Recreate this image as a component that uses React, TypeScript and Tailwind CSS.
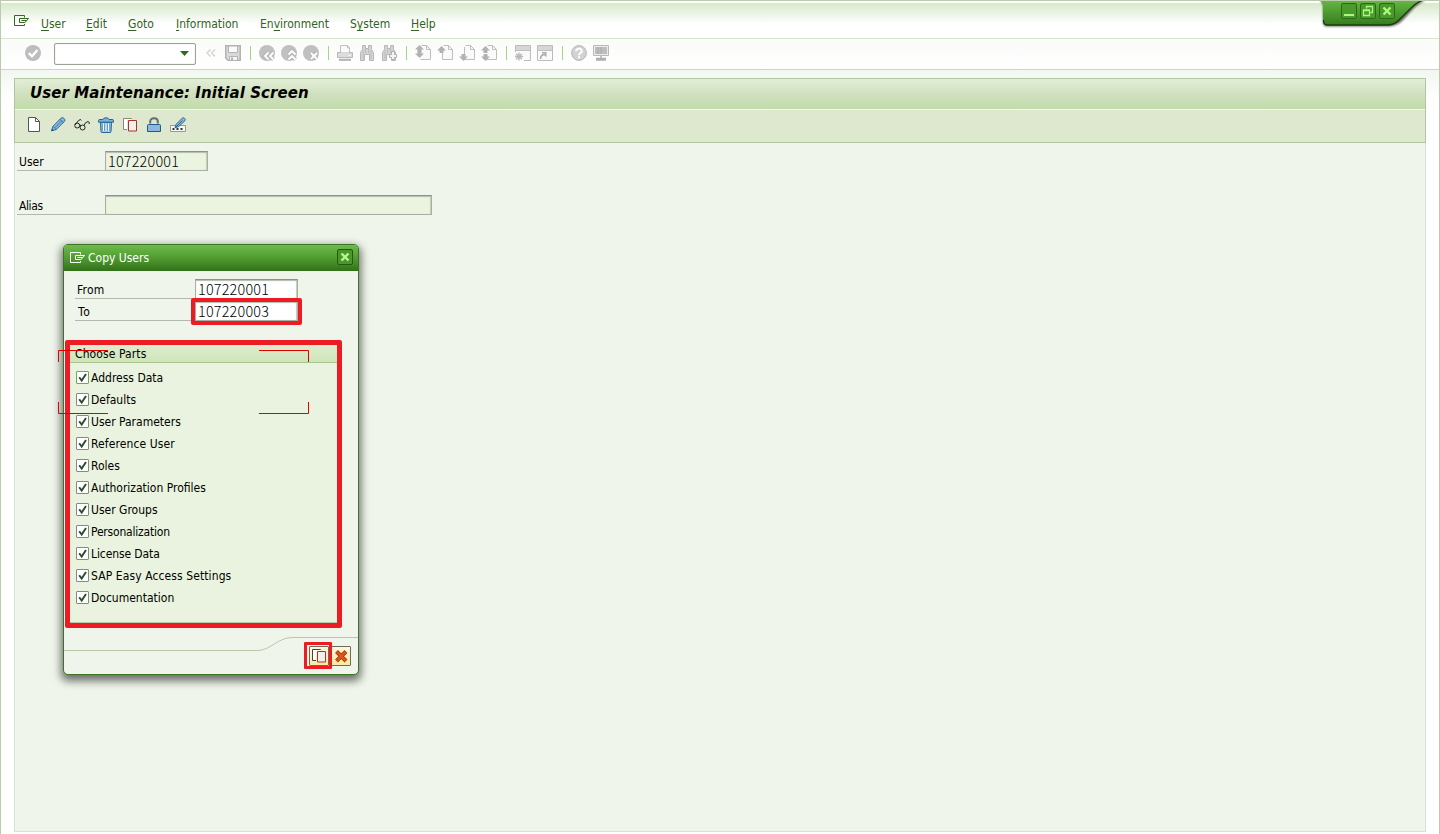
import type { ReactNode } from "react";

function Svg({ children, size = 16 }: { children: ReactNode; size?: number }) {
  return (
    <svg width={size} height={size} viewBox={`0 0 ${size} ${size}`} fill="none" className="block shrink-0">
      {children}
    </svg>
  );
}

function Cell({ children }: { children: ReactNode }) {
  return <div className="flex w-[22px] shrink-0 justify-center pb-0.5">{children}</div>;
}

function Sep() {
  return (
    <div className="flex w-3 shrink-0 justify-center pb-0.5">
      <div className="h-[14px] w-px bg-[#a9d18c]" />
    </div>
  );
}

function ExitIcon({ color }: { color: string }) {
  return (
    <svg width="16" height="12" viewBox="0 0 16 12" fill="none" stroke={color} className="block shrink-0">
      <path d="M10.5 2V.5H.5V10.5H10.5V9" />
      <path d="M14.500 3.500H5.500V7.500H10.500M7.500 5.500H12.500M10.500 2.500V3.500M14.500 3.500L10.500 8" />
    </svg>
  );
}

function OkIcon() {
  return (
    <Svg>
      <circle cx="8" cy="8" r="8" fill="#bdbdbd" />
      <path d="M3.8 8.2 7 11.2 12.4 5" stroke="#fff" strokeWidth="2.4" />
    </Svg>
  );
}

function SaveIcon() {
  return (
    <Svg>
      <path d="M.75.75H15.25V15.25H3L.75 13Z" fill="#d9d9d9" stroke="#b4b4b4" strokeWidth="1.5" />
      <path d="M3.5 1H12.5V7.5H3.5Z" fill="#fafafa" stroke="#b4b4b4" />
      <path d="M4.5 15V11.5H12.5V15" fill="#f5f5f5" stroke="#b4b4b4" />
      <path d="M6 12.500H8V15H6Z" fill="#b4b4b4" />
    </Svg>
  );
}

function RoundIcon({ kind }: { kind: "back" | "up" | "cancel" }) {
  const d =
    kind === "back"
      ? "M9.500 7.500 6 11 9.500 14.5M14.500 7.500 11 11 14.500 14.5"
      : kind === "up"
        ? "M7.5 9.5 11 6 14.5 9.5M7.5 14.5 11 11 14.5 14.5"
        : "M8 8 14 14M14 8 8 14";
  return (
    <Svg>
      <circle cx="8" cy="8" r="8" fill="#c0c0c0" />
      <path d={d} stroke="#b6b6b6" strokeWidth="4" />
      <path d={d} stroke="#fff" strokeWidth="1.9" />
    </Svg>
  );
}

function PrintIcon() {
  return (
    <Svg>
      <path d="M3.5 8V.5H10.5L12.5 2.5V8" fill="#fafafa" stroke="#c0c0c0" />
      <path d="M10.5.5V3H12.5" stroke="#c0c0c0" />
      <path d="M.5 7.5H15.5V12.5H.5Z" fill="#dcdcdc" stroke="#b8b8b8" />
      <path d="M4 5H12V7.500H4Z" fill="#fafafa" />
      <path d="M11.5 10.5H13.5" stroke="#fff" />
      <path d="M2 14.8H14" stroke="#b0b0b0" strokeWidth="2" />
    </Svg>
  );
}

function FindIcon({ plus }: { plus?: boolean }) {
  return (
    <Svg>
      <path
        d="M3.5.5H6.5V3.5H9.5V.5H12.5V4.5L14.5 7.5V15.5H10.5V9.5H5.5V15.5H1.5V7.5L3.5 4.5Z"
        fill="#d4d4d4"
        stroke="#b8b8b8"
      />
      <path d="M6.5 3.5V8M9.5 3.5V8M4 5.5V14M12 5.5V14" stroke="#bcbcbc" />
      {plus && (
        <path
          d="M10.5 6.5H13.5V9.5H15.5V12.5H13.5V14.5H10.5V12.5H8.5V9.5H10.5Z"
          fill="#f4f4f4"
          stroke="#b0b0b0"
        />
      )}
    </Svg>
  );
}

const ARROW_UP = "M4.5 0 9 4.5H6.5V7H2.5V4.5H0Z";

function PageArrowIcon({ kind }: { kind: "first" | "prev" | "next" | "last" }) {
  return (
    <Svg>
      <path d="M4.5.5H11.5L15.5 4.5V14.5H4.5Z" fill="#fafafa" />
      <path d="M6.5.5H11.5L15.5 4.5V14.5H5.5" stroke="#bebebe" />
      {kind !== "first" && kind !== "last" && <path d="M5.5 2V14.5" stroke="#bebebe" />}
      <path d="M11.5.5V4.5H15.5" stroke="#bebebe" />
      {kind === "prev" && <path d={ARROW_UP} transform="translate(0 1)" fill="#b2b2b2" />}
      {kind === "next" && <path d={ARROW_UP} transform="translate(0 16) scale(1 -1)" fill="#b2b2b2" />}
      {(kind === "first" || kind === "last") && (
        <>
          <path d={ARROW_UP} transform={kind === "first" ? "translate(0 0)" : "translate(0 1)"} fill="#b2b2b2" />
          <path d={ARROW_UP} transform={kind === "first" ? "translate(0 13) scale(1 -1)" : "translate(0 16) scale(1 -1)"} fill="#b2b2b2" />
        </>
      )}
    </Svg>
  );
}

function SessionIcon({ kind }: { kind: "new" | "shortcut" }) {
  return (
    <Svg>
      <path d="M.5.5H15.5V15.5H.5Z" fill="#fafafa" stroke="#bcbcbc" />
      <path d="M1 1H15V5H1Z" fill="#d6d6d6" />
      <path d="M1 5.5H15" stroke="#c0c0c0" />
      {kind === "new" ? (
        <>
          <path d="M0 7H9V16H0Z" fill="#fafafa" />
          <path d="M4 7.5V15.5M0 11.5H8M1.2 8.7 6.8 14.3M6.8 8.7 1.2 14.3" stroke="#b8b8b8" strokeWidth="1.3" />
        </>
      ) : (
        <path d="M3.5 14C3.5 11 5 9.5 8 9.5M5 7.8H8.7V11.5" stroke="#aaa" strokeWidth="1.6" />
      )}
    </Svg>
  );
}

function HelpIcon() {
  return (
    <Svg>
      <circle cx="8" cy="8" r="7.4" fill="#d2d2d2" stroke="#b6b6b6" />
      <path d="M5.2 6.2C5.2 2.8 10.8 2.8 10.8 6C10.8 8 8 8 8 10.2" stroke="#fff" strokeWidth="2" />
      <path d="M7 11.3H9V13.2H7Z" fill="#fff" />
    </Svg>
  );
}

function MonitorIcon() {
  return (
    <Svg>
      <path d="M.5.5H15.5V10.5H.5Z" fill="#ececec" stroke="#b8b8b8" />
      <path d="M2 2H14V9H2Z" fill="#bdbdbd" />
      <path d="M5 2V9M8 2V9" stroke="#aaa" />
      <path d="M8 11V13.5M3 13.5H13M3 15H13" stroke="#b0b0b0" strokeWidth="1.5" />
    </Svg>
  );
}

function NewIcon() {
  return (
    <Svg>
      <path d="M2.5 .5H9.5L13.5 4.5V14.5H2.5Z" fill="#fff" stroke="#555" />
      <path d="M9.5 .5V4.5H13.5" stroke="#555" />
    </Svg>
  );
}

function PencilIcon() {
  return (
    <Svg>
      <path d="M1.5 13.8 3 9.3 11 1.200C12 .4 13.4 .7 14.2 1.600 15 2.5 15.2 3.600 14.4 4.5L6.2 12.5Z" fill="#8db7dc" stroke="#2c6a94" />
      <path d="M3 9.3 6.2 12.5M10 2.3 13.2 5.5M5 10.7 12 3.500" stroke="#2c6a94" strokeWidth=".8" />
      <path d="M1.200 14.2 2.2 11.800 3.7 13.3Z" fill="#1b4f75" />
    </Svg>
  );
}

function GlassesIcon() {
  return (
    <Svg>
      <circle cx="3.200" cy="8.500" r="2.500" stroke="#222" />
      <circle cx="8.600" cy="10.500" r="2.500" stroke="#222" />
      <path d="M1 8 4.500 3.500 6.500 2.500 7.300 3.500M5.500 8 7 8.500M10 8.500 11.500 5.800 14 4.500 15.400 5.500 15 7" stroke="#222" />
    </Svg>
  );
}

function TrashIcon() {
  return (
    <Svg>
      <path d="M2.500 5.5H13.500L13 14.500Q13 15.500 12 15.500H4Q3 15.500 3 14.500Z" fill="#a9cbe5" stroke="#1f6797" />
      <path d="M5.5 6.5V14M8 6.5V14M10.5 6.5V14" stroke="#f4f9fc" strokeWidth="1.3" />
      <path d="M6.7 6.5V14M9.3 6.5V14M4.200 6.500V14M11.800 6.500V14" stroke="#2f76a5" strokeWidth=".7" />
      <path d="M.5 3.5Q.5 2.5 2 2.5H5Q5.3.8 8 .8T11 2.5H14Q15.5 2.5 15.5 3.5V5.2H.5Z" fill="#7fb1d6" stroke="#1f6797" />
    </Svg>
  );
}

function CopyIcon({ back = "#8a8782" }: { back?: string }) {
  return (
    <Svg>
      <path d="M9.5 2V1.5H1.5V12.5H5" stroke={back} />
      <path d="M2 2H9V3H5V12H2Z" fill="#fff" />
      <path d="M6.5 3.5H14.5V14H6.5Z" fill="#f1efef" stroke="#a93520" />
    </Svg>
  );
}

function LockIcon() {
  return (
    <Svg>
      <path d="M4.2 6.500V4.5C4.2 .2 11.8 .2 11.8 4.5V6.500" stroke="#6a6a6a" strokeWidth="2" />
      <path d="M2.500 7.500H13.500Q14.500 7.500 14.500 8.500V14.500H1.500V8.500Q1.500 7.500 2.500 7.500Z" fill="#8db7dc" stroke="#1a5c8c" />
    </Svg>
  );
}

function PasswordIcon() {
  return (
    <Svg>
      <path d="M.5 8.5H15.500V14.500H.5Z" fill="#f6f6f6" stroke="#999" />
      <path d="M2.5 12H4.5M6.5 12H8.5M10.500 12H12.5" stroke="#333" strokeWidth="2" />
      <path d="M5 10.8 6.2 7.3 12.2 1.200Q13.2 .2 14.6 1.400T15 3.600L8.8 9.500Z" fill="#8db7dc" stroke="#2c6a94" />
      <path d="M5 11 12.6 3.500" stroke="#2c6a94" />
    </Svg>
  );
}

const menu = [
  { pre: "", key: "U", post: "ser", cls: "w-[45px]" },
  { pre: "", key: "E", post: "dit", cls: "w-[42px]" },
  { pre: "", key: "G", post: "oto", cls: "w-12" },
  { pre: "", key: "I", post: "nformation", cls: "w-[84px]" },
  { pre: "En", key: "v", post: "ironment", cls: "w-[90px]" },
  { pre: "S", key: "y", post: "stem", cls: "w-[61px]" },
  { pre: "", key: "H", post: "elp", cls: "w-10" },
];

const parts = [
  { label: "Address Data", cls: "" },
  { label: "Defaults", cls: "" },
  { label: "User Parameters", cls: "" },
  { label: "Reference User", cls: "tracking-[0.1px]" },
  { label: "Roles", cls: "" },
  { label: "Authorization Profiles", cls: "" },
  { label: "User Groups", cls: "" },
  { label: "Personalization", cls: "tracking-[-0.2px]" },
  { label: "License Data", cls: "tracking-[-0.1px]" },
  { label: "SAP Easy Access Settings", cls: "tracking-[0.1px]" },
  { label: "Documentation", cls: "" },
];

function Field({ value, className }: { value: string; className: string }) {
  return (
    <div
      className={`flex items-center border border-[#a9aea4] border-t-[#8e938a] pb-0.5 pl-0.5 font-['Noto_Sans_CJK_KR',sans-serif] text-[14.4px] leading-[17px] font-light tracking-[0.2px] text-black shadow-[inset_0_1px_1px_#b5bbae,inset_-1px_0_1px_#c8cdc2] ${className}`}
    >
      {value}
    </div>
  );
}

function WindowControls() {
  return (
    <div className="absolute top-0 left-[1316px] h-8 w-[110px]">
      <svg width="110" height="32" viewBox="0 0 110 32" className="absolute inset-0">
        <defs>
          <linearGradient id="tab" x1="0" y1="0" x2="0" y2="1">
            <stop offset="0" stopColor="#66b844" />
            <stop offset="1" stopColor="#357d1d" />
          </linearGradient>
          <filter id="tabShadow" x="-10%" y="-10%" width="120%" height="140%">
            <feGaussianBlur stdDeviation="1.3" />
          </filter>
        </defs>
        <path d="M3 0Q7 2 7 6V22Q7 26.500 11 26.500H74Q82 26 88 19L98 8Q105 2 110 0Z" fill="#000" opacity=".6" filter="url(#tabShadow)" />
        <path d="M2 0Q7 1 7 6V21Q7 25 11 25H72Q79 25 85 18L95 8Q102 1 108 0Z" fill="url(#tab)" />
        <path d="M7.500 20Q7.500 25 11 25H72Q79 25 85 18L95 8Q102 1 108 0" fill="none" stroke="#173f0c" strokeWidth="1.300" />
        <path d="M3 .5H106" stroke="#3f8828" />
      </svg>
      <div className="relative flex gap-[3px] pt-[3px] pl-[25px]">
        {["min", "restore", "close"].map((kind) => (
          <div key={kind} className="h-4 w-4 rounded-[2px] border border-[#2a6a17] bg-[#4a9a2c]">
            <svg width="14" height="14" viewBox="0 0 14 14" fill="none" stroke="#a9f97f" className="block">
              {kind === "min" && <path d="M2 11H12" strokeWidth="2" />}
              {kind === "restore" && (
                <>
                  <path d="M2.500 6.500H8.500V11.500H2.500ZM2 6H9" strokeWidth="1.300" />
                  <path d="M5.500 4.500V2.500H11.500V8.500H9.500M5 2.500H12" strokeWidth="1.300" />
                </>
              )}
              {kind === "close" && <path d="M3.500 3.500 10.500 10.500M10.500 3.500 3.500 10.500" strokeWidth="2.400" />}
            </svg>
          </div>
        ))}
      </div>
    </div>
  );
}

function CheckRow({ label, cls, focused }: { label: string; cls: string; focused: boolean }) {
  return (
    <div className="flex h-[22px] items-center gap-0.5">
      <div
        className={`h-[13px] w-[13px] shrink-0 rounded-[1px] border bg-white ${focused ? "border-[#6eae45]" : "border-[#868b82]"}`}
      >
        <svg width="11" height="11" viewBox="0 0 11 11" fill="none" className="block">
          <path d="M2.200 5.200 4.700 8.500 9 2" stroke="#2b4a2e" strokeWidth="1.900" />
        </svg>
      </div>
      <span className={`pt-0.5 ${cls}`}>{label}</span>
    </div>
  );
}

function CopyDialog() {
  return (
    <div className="absolute top-[244px] left-[63px] flex h-[431px] w-[296px] flex-col rounded-[5px] border border-[#3c7526] bg-[#eff5ea] shadow-[0_4px_9px_2px_rgba(0,0,0,0.55)]">
      <div className="flex h-[26px] shrink-0 items-center rounded-t-[4px] bg-linear-to-b from-[#6dbb4a] via-[#519c31] to-[#327119] pr-[5px] pl-[6px]">
        <ExitIcon color="#fff" />
        <span className="ml-0.5 flex-1 text-[12px] text-white">Copy Users</span>
        <div className="mb-0.5 h-4 w-4 rounded-[2px] border border-[#24590f] bg-[#4d962e]">
          <svg width="14" height="14" viewBox="0 0 14 14" fill="none" className="block">
            <path d="M3.500 3.500 10.500 10.500M10.500 3.500 3.500 10.500" stroke="#b4fa8c" strokeWidth="2.400" />
          </svg>
        </div>
      </div>

      <div className="flex h-[70px] shrink-0 flex-col gap-0.5 pt-2 pl-[11px]">
        <div className="flex h-5 items-stretch">
          <div className="w-[120px] border-b border-[#b4b9ae] pt-[3px] pl-0.5 leading-4 tracking-[0.2px]">From</div>
          <Field value="107220001" className="w-[103px] bg-white" />
        </div>
        <div className="flex h-5 items-stretch">
          <div className="w-[120px] border-b border-[#b4b9ae] pt-[3px] pl-[3px] leading-4 tracking-[0.8px]">To</div>
          <Field value="107220003" className="w-[103px] bg-white" />
        </div>
      </div>

      <div className="ml-[5px] flex h-[282px] w-[269px] shrink-0 flex-col border border-[#b5c9a4] bg-[#e9f3df]">
        <div className="flex h-[21px] items-center border-b border-[#a5c490] bg-linear-to-b from-[#e0efd2] to-[#cfe5b9] pt-[3px] pl-[5px] tracking-[0.1px]">
          Choose Parts
        </div>
        <div className="flex flex-col pt-[3px] pl-[6px]">
          {parts.map((part, i) => (
            <CheckRow key={part.label} label={part.label} cls={part.cls} focused={i === 0} />
          ))}
        </div>
      </div>

      <div className="relative flex-1">
        <svg width="294" height="20" viewBox="0 0 294 20" fill="none" className="absolute top-[10px] left-0">
          <path d="M0 17.500H194C206 17.500 214 4.500 228 4.500H294" stroke="#b9c8a8" />
        </svg>
        <div className="relative flex gap-0.5 pt-[23px] pl-[245px]">
          <div className="flex h-5 w-5 items-center justify-center rounded-[1px] border border-[#6d6a5c] bg-linear-to-b from-[#fdf7dc] to-[#fbe9a0]">
            <CopyIcon back="#44423e" />
          </div>
          <div className="flex h-5 w-5 items-center justify-center rounded-[1px] border border-[#6d6a5c] bg-linear-to-b from-[#fdf7dc] to-[#fbe9a0]">
            <svg width="15" height="15" viewBox="0 0 15 15" fill="none">
              <path d="M2.500 2.500 12 12M12 2.500 2.500 12" stroke="#a83a0c" strokeWidth="4" />
              <path d="M3 3 11.500 11.500M11.500 3 3 11.500" stroke="#e0571b" strokeWidth="2.400" />
            </svg>
          </div>
        </div>
      </div>
    </div>
  );
}

function Annotations() {
  return (
    <>
      <div className="absolute top-[298px] left-[191px] h-[27px] w-[111px] rounded-[2px] border-[4.500px] border-[#ed1c24]" />
      <div className="absolute top-[340px] left-[65px] h-[288px] w-[277px] rounded-[2px] border-[5px] border-[#ed1c24]" />
      <div className="absolute top-[642px] left-[304px] h-[27px] w-[28px] rounded-[1px] border-[3px] border-[#ed1c24]" />
      <svg width="251" height="64" viewBox="0 0 251 64" fill="none" className="absolute top-[350px] left-[58px]">
        <path
          d="M.5 12V.5H50M201 .5H250.500V12M.5 52V63.500H50M201 63.500H250.500V52"
          stroke="#e00000"
        />
      </svg>
    </>
  );
}

export default function App() {
  return (
    <div className="relative flex h-[834px] w-[1440px] flex-col overflow-hidden border-x border-t border-[#bccbac] bg-white font-['DejaVu_Sans_Condensed','DejaVu_Sans',sans-serif] text-[12px] text-black [font-stretch:condensed]">
      <div className="mt-0.5 flex h-[36px] shrink-0 border-b border-[#d9e3d0] bg-linear-to-b from-[#d8e9cb] to-white to-60% pt-[12px] pl-[13px]">
        <ExitIcon color="#33691e" />
        <nav className="flex pl-[11px] leading-[18px] text-[#2f6420]">
          {menu.map((m) => (
            <div key={m.post} className={m.cls}>
              {m.pre}
              <span className="underline underline-offset-2">{m.key}</span>
              {m.post}
            </div>
          ))}
        </nav>
      </div>

      <div className="flex h-[31px] shrink-0 items-center border-b border-[#ccd3c8] bg-linear-to-b from-[#fafcf9] to-white pl-[21px]">
        <Cell>
          <OkIcon />
        </Cell>
        <div className="mr-1 ml-[10px] flex h-[22px] w-[142px] items-center justify-end rounded-[2px] border border-[#9aa394] bg-white pr-[6px] pb-0.5 shadow-[inset_0_0_1px_#aab3a4]">
          <svg width="9" height="5" viewBox="0 0 9 5">
            <path d="M0 0H9L4.500 5Z" fill="#2f6e17" />
          </svg>
        </div>
        <Cell>
          <Svg>
            <path d="M7.500 4.500 4 8 7.500 11.500M12 4.500 8.500 8 12 11.500" stroke="#cfcfcf" strokeWidth="1.200" />
          </Svg>
        </Cell>
        <Cell><SaveIcon /></Cell>
        <Sep />
        <Cell><RoundIcon kind="back" /></Cell>
        <Cell><RoundIcon kind="up" /></Cell>
        <Cell><RoundIcon kind="cancel" /></Cell>
        <Sep />
        <Cell><PrintIcon /></Cell>
        <Cell><FindIcon /></Cell>
        <Cell><FindIcon plus /></Cell>
        <Sep />
        <Cell><PageArrowIcon kind="first" /></Cell>
        <Cell><PageArrowIcon kind="prev" /></Cell>
        <Cell><PageArrowIcon kind="next" /></Cell>
        <Cell><PageArrowIcon kind="last" /></Cell>
        <Sep />
        <Cell><SessionIcon kind="new" /></Cell>
        <Cell><SessionIcon kind="shortcut" /></Cell>
        <Sep />
        <Cell><HelpIcon /></Cell>
        <Cell><MonitorIcon /></Cell>
      </div>

      <div className="flex flex-1 flex-col bg-linear-to-b from-[#f2f7f1] to-white to-[30px] px-[13px] pt-2">
        <div className="flex h-[65px] shrink-0 flex-col border border-[#b1c5a0] bg-[#dde8cf]">
          <div className="flex h-[31px] shrink-0 items-center border-b border-[#f3f8ee] bg-linear-to-b from-[#e2eed6] via-[#d0e0bf] to-[#c2dbab] pb-px pl-[15px] font-['DejaVu_Sans',sans-serif] text-[15px] font-bold italic [font-stretch:normal]">
            <h1 className="tracking-[0.08px]">User Maintenance: Initial Screen</h1>
          </div>
          <div className="flex flex-1 items-center gap-2 pb-[3px] pl-[11px]">
            <NewIcon />
            <PencilIcon />
            <GlassesIcon />
            <TrashIcon />
            <CopyIcon />
            <LockIcon />
            <PasswordIcon />
          </div>
        </div>
        <div className="mb-0.5 flex flex-1 flex-col gap-6 border-x border-b border-[#d8e3d3] bg-[#eff5ea] pt-2 pl-0.5">
          <div className="flex h-5 items-stretch">
            <div className="w-[88px] border-b border-[#b4b9ae] pt-[3px] pl-0.5 leading-4">User</div>
            <Field value="107220001" className="w-[103px] bg-[#eaf4df]" />
          </div>
          <div className="flex h-5 items-stretch">
            <div className="w-[88px] border-b border-[#b4b9ae] pt-[3px] pl-0.5 leading-4 tracking-[-0.4px]">Alias</div>
            <Field value="" className="w-[327px] bg-[#eaf4df]" />
          </div>
        </div>
      </div>

      <div className="absolute -top-px -left-px">
        <WindowControls />
        <CopyDialog />
        <Annotations />
      </div>
    </div>
  );
}
